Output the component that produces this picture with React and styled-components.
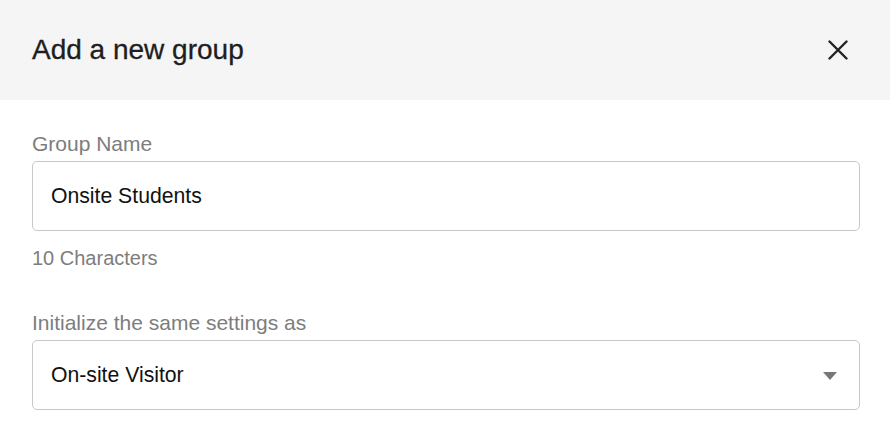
import React from "react";
import styled, { createGlobalStyle } from "styled-components";

const GlobalStyle = createGlobalStyle`
  body {
    margin: 0;
    background: #fff;
    font-family: "Liberation Sans", Arial, sans-serif;
  }
`;

const Modal = styled.div`
  width: 890px;
  height: 434px;
  background: #fff;
  overflow: hidden;
`;

const Header = styled.div`
  height: 100px;
  background: #f5f5f5;
  display: flex;
  align-items: center;
  justify-content: space-between;
  padding: 0 32px;
  box-sizing: border-box;
`;

const Title = styled.h2`
  margin: 0;
  font-size: 28px;
  font-weight: 400;
  color: #1e1e1e;
  -webkit-text-stroke: 0.3px #1e1e1e;
`;

const CloseButton = styled.button`
  border: 0;
  background: none;
  padding: 0;
  width: 20px;
  height: 20px;
  margin-right: 10px;
  cursor: pointer;
  display: flex;
`;

const Body = styled.div`
  padding: 32px 30px 0 32px;
  display: flex;
  flex-direction: column;
`;

const Label = styled.label`
  display: block;
  font-size: 21px;
  line-height: 24px;
  color: #7d7d7d;
  margin-top: ${(p) => p.$gap || 0}px;
`;

const Box = styled.div`
  margin-top: 5px;
  height: 70px;
  border: 1px solid #c8c8c8;
  border-radius: 5px;
  box-sizing: border-box;
  display: flex;
  align-items: center;
  justify-content: space-between;
  padding: 0 22px 0 18px;
  font-size: 21.2px;
  color: #111;
`;

const Helper = styled.div`
  margin-top: 15px;
  font-size: 20px;
  line-height: 24px;
  color: #7d7d7d;
`;

const Caret = styled.span`
  width: 0;
  height: 0;
  border-left: 7px solid transparent;
  border-right: 7px solid transparent;
  border-top: 8px solid #777;
  margin-top: 2px;
`;

export default function App() {
  return (
    <>
      <GlobalStyle />
      <Modal>
        <Header>
          <Title>Add a new group</Title>
          <CloseButton aria-label="Close">
            <svg width="20" height="20" viewBox="0 0 20 20">
              <path
                d="M1.5 1.5 L18.5 18.5 M18.5 1.5 L1.5 18.5"
                stroke="#222"
                strokeWidth="2.4"
                strokeLinecap="round"
              />
            </svg>
          </CloseButton>
        </Header>
        <Body>
          <Label>Group Name</Label>
          <Box>Onsite Students</Box>
          <Helper>10 Characters</Helper>
          <Label $gap={41}>Initialize the same settings as</Label>
          <Box>
            On-site Visitor
            <Caret />
          </Box>
        </Body>
      </Modal>
    </>
  );
}
